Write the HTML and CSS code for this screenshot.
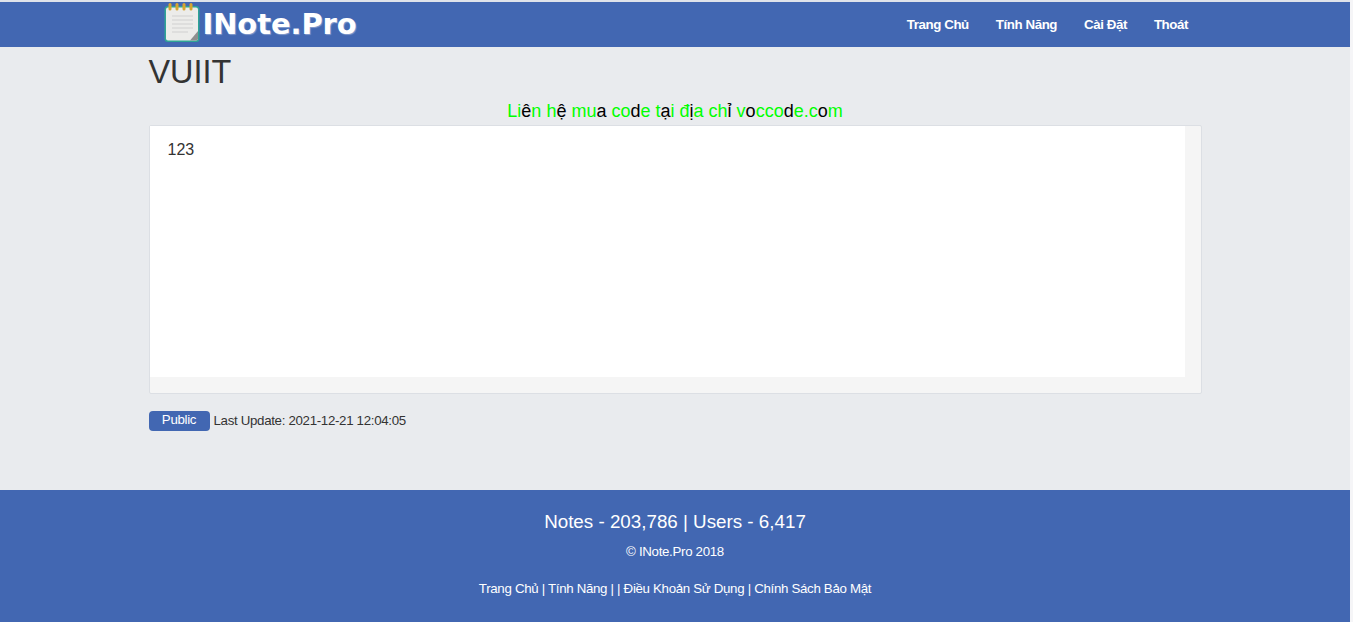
FILE: index.html
```html
<!DOCTYPE html>
<html lang="vi">
  <head>
    <meta charset="UTF-8" />
    <meta name="viewport" content="width=device-width, initial-scale=1.0" />
    <title>VUIIT - INote.Pro</title>
    <link rel="stylesheet" href="styles.css">
  </head>
  <body>
    <div class="page">
      <nav class="navbar">
        <div class="navbar-inner">
          <a class="brand" href="#">
            <svg class="brand-icon" viewBox="0 0 36 40" width="36" height="40">
              <rect x="0.500" y="3" width="35" height="36" rx="3.500" fill="#2fa595"/>
              <rect x="2" y="4.500" width="32" height="33" rx="2" fill="#ececea"/>
              <path d="M34 28 L34 35.500 Q34 37.500 32 37.500 L26 37.500 Z" fill="#8f8f8f"/>
              <path d="M8 13H29M8 17H29M8 21H29M8 25H29M8 29H24" stroke="#d0d0d0" stroke-width="1.200" fill="none"/>
              <g fill="#d8a52f">
                <rect x="4.500" y="0" width="3" height="7.500" rx="1.500"/>
                <rect x="11.500" y="0" width="3" height="7.500" rx="1.500"/>
                <rect x="18.500" y="0" width="3" height="7.500" rx="1.500"/>
                <rect x="25.500" y="0" width="3" height="7.500" rx="1.500"/>
              </g>
            </svg>
            <span class="brand-text">INote.Pro</span>
          </a>
          <ul class="nav-links">
            <li><a href="#">Trang Chủ</a></li>
            <li><a href="#">Tính Năng</a></li>
            <li><a href="#">Cài Đặt</a></li>
            <li><a href="#">Thoát</a></li>
          </ul>
        </div>
      </nav>

      <main class="container">
        <h1 class="note-title">VUIIT</h1>
        <p class="promo"><span class="g">Li</span>ê<span class="g">n</span> <span class="g">h</span>ệ <span class="g">mu</span>a <span class="g">co</span>d<span class="g">e</span> <span class="g">t</span>ạ<span class="g">i</span> <span class="g">đ</span>ị<span class="g">a</span> <span class="g">ch</span>ỉ <span class="g">v</span>o<span class="g">cco</span>d<span class="g">e.c</span>o<span class="g">m</span></p>
        <div class="note-box">
          <div class="note-body">123</div>
        </div>
        <div class="note-meta">
          <span class="badge">Public</span>
          <span class="updated">Last Update: 2021-12-21 12:04:05</span>
        </div>
      </main>

      <footer class="footer">
        <div class="stats">Notes - 203,786 | Users - 6,417</div>
        <div class="copyright">© INote.Pro 2018</div>
        <div class="footer-links">
          <a href="#">Trang Chủ</a> | <a href="#">Tính Năng</a> | | <a href="#">Điều Khoản Sử Dụng</a> | <a href="#">Chính Sách Bảo Mật</a>
        </div>
      </footer>
    </div>
  </body>
</html>
```

FILE: styles.css
```css
* {
  margin: 0;
  padding: 0;
  box-sizing: border-box;
}
html, body {
  height: 100%;
  overflow: hidden;
}
body {
  background-color: #f5f5f7;
  font-family: "Liberation Sans", Arial, sans-serif;
  font-size: 13.300px;
  letter-spacing: -0.320px;
  color: #333;
}
a {
  color: inherit;
  text-decoration: none;
}
.page {
  width: 1350px;
  height: 622px;
  padding-top: 2px;
  background-color: #e9ebee;
  display: flex;
  flex-direction: column;
  box-shadow: inset 0 2px 0 #dfe3ea;
}
.navbar {
  height: 45px;
  flex: none;
  background-color: #4267b2;
}
.navbar-inner {
  width: 1053px;
  height: 45px;
  margin: 0 auto;
  padding-left: 15px;
  display: flex;
  align-items: center;
  justify-content: space-between;
}
.brand {
  display: flex;
  align-items: flex-start;
  gap: 3px;
  height: 45px;
  color: #fff;
  letter-spacing: 0;
}
.brand-icon {
  display: block;
  margin-top: 1px;
}
.brand-text {
  font-family: "DejaVu Sans", sans-serif;
  font-weight: bold;
  font-size: 29px;
  line-height: 45px;
  letter-spacing: -0.100px;
  text-shadow: 1px 1px 1px rgba(255, 255, 255, 0.35);
}
.nav-links {
  list-style: none;
  display: flex;
}
.nav-links a {
  display: block;
  padding: 0 13.500px;
  color: #fff;
  font-weight: bold;
  letter-spacing: -0.420px;
  line-height: 45px;
}
.container {
  width: 1053px;
  margin: 0 auto;
  flex: 1;
}
.note-title {
  font-size: 32.400px;
  font-weight: normal;
  line-height: 40px;
  margin-top: 5px;
  letter-spacing: 0;
  color: #333;
}
.promo {
  text-align: center;
  font-size: 18px;
  line-height: 20px;
  margin-top: 9px;
  margin-bottom: 4px;
  letter-spacing: 0;
  color: #000;
}
.promo .g {
  color: #00ff00;
}
.note-box {
  height: 269px;
  background-color: #f5f5f5;
  border: 1px solid #dcdfe4;
  border-radius: 2px;
}
.note-body {
  width: 1035px;
  height: 251px;
  background-color: #fff;
  padding: 14px 18px;
  font-size: 16px;
  line-height: 20px;
  letter-spacing: 0;
}
.note-meta {
  display: flex;
  align-items: flex-start;
  gap: 4px;
  margin-top: 17px;
  height: 20px;
}
.badge {
  width: 61px;
  height: 20px;
  background-color: #4267b2;
  border-radius: 4px;
  color: #fff;
  text-align: center;
  line-height: 17px;
}
.updated {
  line-height: 20px;
}
.footer {
  height: 132px;
  flex: none;
  background-color: #4267b2;
  color: #fff;
  text-align: center;
}
.stats {
  font-size: 18.800px;
  line-height: 20px;
  margin-top: 22px;
  letter-spacing: 0;
}
.copyright {
  line-height: 20px;
  margin-top: 10px;
}
.footer-links {
  line-height: 20px;
  margin-top: 17px;
}
```
